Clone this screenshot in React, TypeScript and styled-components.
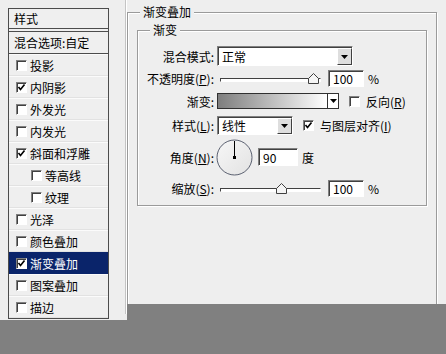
import React from 'react';
import styled, { createGlobalStyle } from 'styled-components';

const GlobalStyle = createGlobalStyle`
    body {
        margin: 0;
        background: #808080;
        font-family: "Noto Sans CJK SC", "DejaVu Sans", sans-serif;
        font-size: 12px;
        color: #000;
    }
    #root {
        width: 446px;
        height: 354px;
        overflow: hidden;
    }
`;

const Page = styled.div`
    display: flex;
    align-items: flex-start;
`;

const Sidebar = styled.div`
    width: 127px;
    height: 320px;
    box-sizing: border-box;
    padding: 8px 0 0 8px;
    background: #eeeeee;
    display: flex;
    align-items: flex-start;
`;

const Splitter = styled.div`
    width: 2px;
    height: 314px;
    margin-left: 16px;
    margin-top: -8px;
    box-sizing: border-box;
    border-left: 1px solid #c4c4c4;
    border-right: 1px solid #ffffff;
`;

const StylePanel = styled.div`
    width: 101px;
    height: 311px;
    box-sizing: border-box;
    border: 1px solid #4c4c4c;
    background: #efefef;
    display: flex;
    flex-direction: column;
    overflow: hidden;
`;

const PanelHeader = styled.div`
    height: 23px;
    box-sizing: border-box;
    padding-left: 5px;
    line-height: 19px;
    border-bottom: 4px double #4c4c4c;
`;

const BlendRow = styled.div`
    height: 22px;
    box-sizing: border-box;
    padding-left: 5px;
    line-height: 21px;
    border-bottom: 1px solid #4c4c4c;
`;

const EffectRow = styled.div<{ $selected?: boolean; $indent?: boolean }>`
    height: 22px;
    flex-shrink: 0;
    box-sizing: border-box;
    display: flex;
    align-items: center;
    gap: 3px;
    padding-left: ${p => (p.$indent ? 22 : 7)}px;
    background: ${p => (p.$selected ? '#0a246a' : 'transparent')};
    color: ${p => (p.$selected ? '#ffffff' : '#000000')};
    border-bottom: 1px solid ${p => (p.$selected ? '#0a246a' : '#e2e2e2')};
    border-top: 1px solid ${p => (p.$selected ? '#0a246a' : '#fbfbfb')};
`;

const Box = styled.span`
    width: 11px;
    height: 11px;
    flex-shrink: 0;
    box-sizing: border-box;
    background: #ffffff;
    border: 1px solid;
    border-color: #808080 #ffffff #ffffff #808080;
    box-shadow: inset 1px 1px 0 #404040;
    display: inline-flex;
    align-items: center;
    justify-content: center;
`;

const CheckBox: React.FC<{ checked?: boolean }> = ({ checked }) => (
    <Box>
        {checked && (
            <svg width="9" height="9" viewBox="0 0 9 9">
                <polyline points="1.5,4 3.5,6.5 7.5,1.5" fill="none" stroke="#000" strokeWidth="1.6" />
            </svg>
        )}
    </Box>
);

const Main = styled.div`
    width: 319px;
    height: 304px;
    box-sizing: border-box;
    padding-top: 12px;
    background: #eeeeee;
    overflow: hidden;
`;

const GroupBox = styled.div<{ $w: number; $h: number }>`
    position: relative;
    width: ${p => p.$w}px;
    height: ${p => p.$h}px;
    box-sizing: border-box;
    border: 1px solid #9a9a9a;
    box-shadow: 1px 1px 0 #ffffff, inset 1px 1px 0 #ffffff;
`;

const InnerGroup = styled(GroupBox)`
    margin: 17px 0 0 9px;
    padding-top: 15px;
    display: flex;
    flex-direction: column;
`;

const Legend = styled.span`
    position: absolute;
    top: -8px;
    left: 12px;
    padding: 0 3px;
    line-height: 14px;
    background: #eeeeee;
`;

const Row = styled.div<{ $h: number; $mt?: number }>`
    height: ${p => p.$h}px;
    margin-top: ${p => p.$mt || 0}px;
    display: flex;
    align-items: center;
`;

const Label = styled.span`
    width: 76px;
    margin-right: 3px;
    text-align: right;
    white-space: nowrap;
`;

const Sunken = styled.div<{ $w: number; $h: number }>`
    width: ${p => p.$w}px;
    height: ${p => p.$h}px;
    box-sizing: border-box;
    background: #ffffff;
    border: 1px solid;
    border-color: #808080 #ffffff #ffffff #808080;
    box-shadow: inset 1px 1px 0 #404040;
    display: flex;
    align-items: center;
    padding-left: 4px;
    position: relative;
`;

const ArrowButton = styled.span`
    position: absolute;
    top: 1px;
    right: 0;
    bottom: 0;
    width: 15px;
    box-sizing: border-box;
    background: #dedede;
    border: 1px solid;
    border-color: #ffffff #404040 #404040 #ffffff;
    display: flex;
    align-items: center;
    justify-content: center;
`;

const Arrow = () => (
    <svg width="7" height="4" viewBox="0 0 7 4">
        <polygon points="0,0 7,0 3.5,4" fill="#000" />
    </svg>
);

const SliderTrack = styled.div`
    position: relative;
    width: 101px;
    height: 11px;
    margin-left: 3px;
    margin-right: 7px;
    &::before {
        content: '';
        position: absolute;
        left: 0;
        right: 0;
        top: 5px;
        height: 4px;
        box-sizing: border-box;
        border: 1px solid;
        border-color: #404040 #ffffff #ffffff #404040;
        background: #ffffff;
    }
`;

const Thumb = styled.svg`
    position: absolute;
    top: 0;
`;

const Slider: React.FC<{ ratio: number }> = ({ ratio }) => (
    <SliderTrack>
        <Thumb width="11" height="11" viewBox="0 0 11 11" style={{ left: 2 + ratio * 91 - 5 }}>
            <polygon points="5.5,0.5 10.5,5.5 10.5,10.5 0.5,10.5 0.5,5.5" fill="#f4f4f4" stroke="#404040" />
        </Thumb>
    </SliderTrack>
);

const Unit = styled.span`
    margin-left: 4px;
`;

const GradientBar = styled.div`
    width: 122px;
    height: 16px;
    box-sizing: border-box;
    border: 1px solid #303030;
    display: flex;
`;

const GradientFill = styled.div`
    flex: 1;
    background: linear-gradient(to right, #7e7e7e, #ffffff);
`;

const GradientArrow = styled.div`
    width: 10px;
    background: #ffffff;
    border-left: 1px solid #303030;
    display: flex;
    align-items: center;
    justify-content: center;
`;

const CheckLabel = styled.label`
    display: flex;
    align-items: center;
    gap: 6px;
    margin-left: 10px;
    white-space: nowrap;
`;

const Dial = styled.svg`
    margin-left: -1px;
    margin-right: 5px;
`;

const Gap = styled.span`
    width: 4px;
`;

export default function App() {
    const effects = [
        { name: '投影', checked: false },
        { name: '内阴影', checked: true },
        { name: '外发光', checked: false },
        { name: '内发光', checked: false },
        { name: '斜面和浮雕', checked: true },
        { name: '等高线', checked: false, indent: true },
        { name: '纹理', checked: false, indent: true },
        { name: '光泽', checked: false },
        { name: '颜色叠加', checked: false },
        { name: '渐变叠加', checked: true, selected: true },
        { name: '图案叠加', checked: false },
        { name: '描边', checked: false },
    ];

    return (
        <>
            <GlobalStyle />
            <Page>
                <Sidebar>
                    <StylePanel>
                        <PanelHeader>样式</PanelHeader>
                        <BlendRow>混合选项:自定</BlendRow>
                        {effects.map(e => (
                            <EffectRow key={e.name} $selected={e.selected} $indent={e.indent}>
                                <CheckBox checked={e.checked} />
                                {e.name}
                            </EffectRow>
                        ))}
                    </StylePanel>
                    <Splitter />
                </Sidebar>
                <Main>
                    <GroupBox $w={310} $h={310}>
                        <Legend>渐变叠加</Legend>
                        <InnerGroup $w={290} $h={176}>
                            <Legend>渐变</Legend>
                            <Row $h={20}>
                                <Label>混合模式:</Label>
                                <Sunken $w={136} $h={20}>
                                    正常
                                    <ArrowButton><Arrow /></ArrowButton>
                                </Sunken>
                            </Row>
                            <Row $h={17} $mt={4}>
                                <Label>不透明度(<u>P</u>):</Label>
                                <Slider ratio={1} />
                                <Sunken $w={36} $h={17}>100</Sunken>
                                <Unit>%</Unit>
                            </Row>
                            <Row $h={16} $mt={6}>
                                <Label>渐变:</Label>
                                <GradientBar>
                                    <GradientFill />
                                    <GradientArrow><Arrow /></GradientArrow>
                                </GradientBar>
                                <CheckLabel>
                                    <CheckBox />
                                    <span>反向(<u>R</u>)</span>
                                </CheckLabel>
                            </Row>
                            <Row $h={19} $mt={7}>
                                <Label>样式(<u>L</u>):</Label>
                                <Sunken $w={76} $h={19}>
                                    线性
                                    <ArrowButton><Arrow /></ArrowButton>
                                </Sunken>
                                <CheckLabel>
                                    <CheckBox checked />
                                    <span>与图层对齐(<u>I</u>)</span>
                                </CheckLabel>
                            </Row>
                            <Row $h={36} $mt={4}>
                                <Label>角度(<u>N</u>):</Label>
                                <Dial width="37" height="37" viewBox="0 0 37 37">
                                    <defs>
                                        <linearGradient id="dialFill" x1="0" y1="0" x2="1" y2="1">
                                            <stop offset="0" stopColor="#f7f7f7" />
                                            <stop offset="1" stopColor="#e2e2e2" />
                                        </linearGradient>
                                    </defs>
                                    <circle cx="18.5" cy="18.5" r="17.5" fill="url(#dialFill)" stroke="#5a6070" strokeWidth="1" />
                                    <line x1="18.5" y1="18.5" x2="18.5" y2="2" stroke="#000" strokeWidth="1" />
                                    <rect x="17" y="17" width="3" height="3" fill="#000" />
                                </Dial>
                                <Sunken $w={40} $h={18}>90</Sunken>
                                <Gap />
                                <span>度</span>
                            </Row>
                            <Row $h={17} $mt={5}>
                                <Label>缩放(<u>S</u>):</Label>
                                <Slider ratio={0.65} />
                                <Sunken $w={36} $h={17}>100</Sunken>
                                <Unit>%</Unit>
                            </Row>
                        </InnerGroup>
                    </GroupBox>
                </Main>
            </Page>
        </>
    );
}
